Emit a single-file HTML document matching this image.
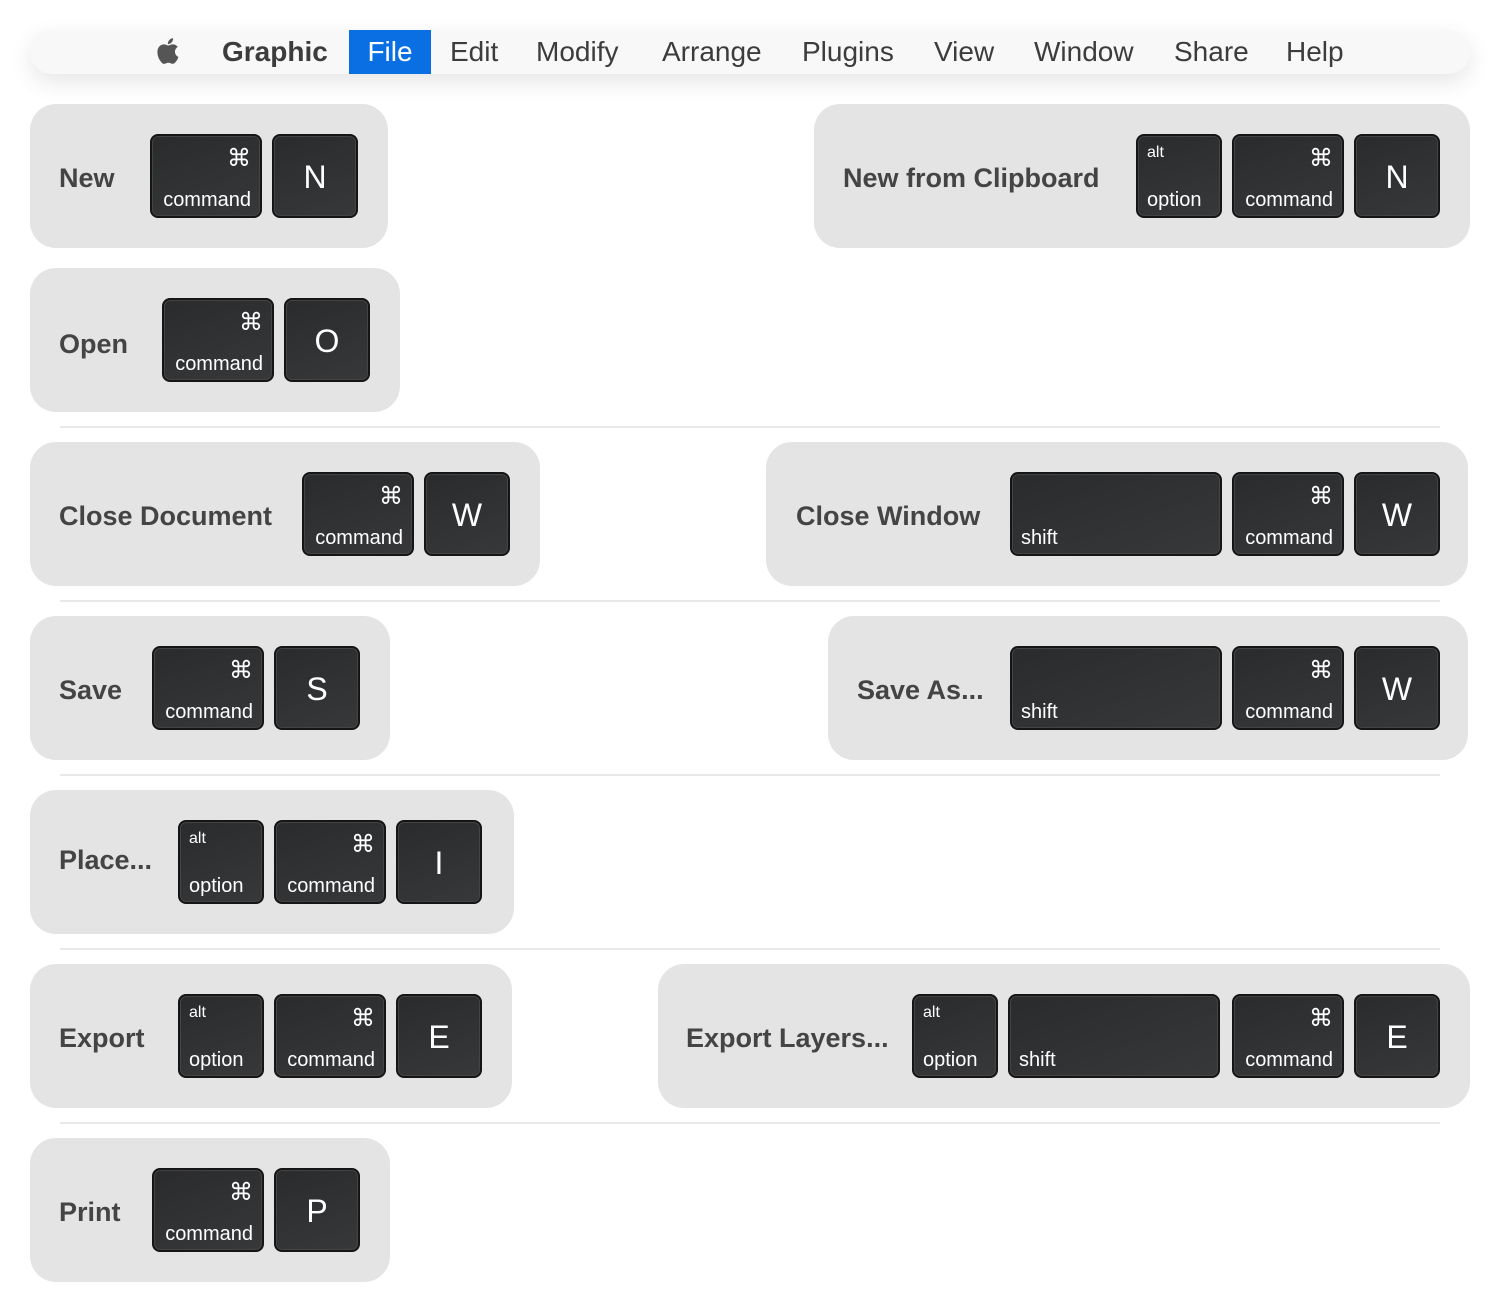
<!DOCTYPE html>
<html><head><meta charset="utf-8"><style>
*{margin:0;padding:0;box-sizing:border-box}
body{width:1500px;height:1312px;background:#fff;position:relative;overflow:hidden;font-family:"Liberation Sans",sans-serif}
.bar{position:absolute;left:30px;top:30px;width:1440px;height:44px;background:#f8f8f8;border-radius:22px;box-shadow:0 8px 24px rgba(0,0,0,0.10)}
.m{position:absolute;top:30px;height:44px;line-height:44px;font-size:28px;color:#3c3c3c}
.file{background:#0a6fe2;color:#fff;left:349px;width:82px;text-align:center}
.p{position:absolute;height:144px;background:#e4e4e4;border-radius:26px}
.sep{position:absolute;left:60px;width:1380px;height:2px;background:#e8e8e8}
.l{position:absolute;font-size:27px;font-weight:bold;color:#444;line-height:40px;margin-top:2px}
.k{position:absolute;height:84px;background:linear-gradient(160deg,#2a2b2d,#37383a);border:2px solid #151515;border-radius:8px;color:#fff;box-shadow:inset 0 0 0 1px #444}
.k .b{position:absolute;bottom:5px;font-size:20px;line-height:22px}
.k .r{right:9px}.k .lf{left:9px}
.k .c{position:absolute;right:9px;top:8px;font-size:24px;font-family:"DejaVu Sans",sans-serif}
.k .a{position:absolute;left:9px;top:8px;font-size:16px}
.k .t{position:absolute;left:0;right:0;top:0;line-height:82px;text-align:center;font-size:32px}
</style></head><body>
<div class="bar"></div>
<svg style="position:absolute;left:154px;top:35px" width="28" height="32" viewBox="0 0 24 24"><path fill="#555" d="M16.365 1.43c0 1.14-.493 2.27-1.177 3.08-.744.9-1.99 1.57-2.987 1.57-.12 0-.23-.02-.3-.03-.01-.06-.04-.22-.04-.39 0-1.15.572-2.27 1.206-2.98.804-.94 2.142-1.64 3.248-1.68.03.13.05.28.05.43zm4.565 15.71c-.03.07-.463 1.58-1.518 3.12-.945 1.34-1.94 2.71-3.43 2.71-1.517 0-1.9-.88-3.63-.88-1.698 0-2.302.91-3.67.91-1.377 0-2.332-1.26-3.428-2.8-1.287-1.820-2.323-4.63-2.323-7.28 0-4.28 2.797-6.55 5.552-6.55 1.448 0 2.675.95 3.6.95.865 0 2.222-1.010 3.902-1.010.613 0 2.886.06 4.374 2.19-.13.09-2.383 1.37-2.383 4.19 0 3.26 2.854 4.42 2.955 4.45z"/></svg>
<div class="m" style="left:222px;font-weight:bold">Graphic</div>
<div class="m file">File</div>
<div class="m" style="left:450px">Edit</div>
<div class="m" style="left:536px">Modify</div>
<div class="m" style="left:662px">Arrange</div>
<div class="m" style="left:802px">Plugins</div>
<div class="m" style="left:934px">View</div>
<div class="m" style="left:1034px">Window</div>
<div class="m" style="left:1174px">Share</div>
<div class="m" style="left:1286px">Help</div>

<div class="sep" style="top:426px"></div>
<div class="sep" style="top:600px"></div>
<div class="sep" style="top:774px"></div>
<div class="sep" style="top:948px"></div>
<div class="sep" style="top:1122px"></div>

<div class="p" style="left:30px;top:104px;width:358px"></div>
<div class="l" style="left:59px;top:156px">New</div>
<div class="k" style="left:150px;top:134px;width:112px"><span class="c">⌘</span><span class="b r">command</span></div>
<div class="k" style="left:272px;top:134px;width:86px"><span class="t">N</span></div>
<div class="p" style="left:814px;top:104px;width:656px"></div>
<div class="l" style="left:843px;top:156px">New from Clipboard</div>
<div class="k" style="left:1136px;top:134px;width:86px"><span class="a">alt</span><span class="b lf">option</span></div>
<div class="k" style="left:1232px;top:134px;width:112px"><span class="c">⌘</span><span class="b r">command</span></div>
<div class="k" style="left:1354px;top:134px;width:86px"><span class="t">N</span></div>

<div class="p" style="left:30px;top:268px;width:370px"></div>
<div class="l" style="left:59px;top:322px">Open</div>
<div class="k" style="left:162px;top:298px;width:112px"><span class="c">⌘</span><span class="b r">command</span></div>
<div class="k" style="left:284px;top:298px;width:86px"><span class="t">O</span></div>

<div class="p" style="left:30px;top:442px;width:510px"></div>
<div class="l" style="left:59px;top:494px">Close Document</div>
<div class="k" style="left:302px;top:472px;width:112px"><span class="c">⌘</span><span class="b r">command</span></div>
<div class="k" style="left:424px;top:472px;width:86px"><span class="t">W</span></div>
<div class="p" style="left:766px;top:442px;width:702px"></div>
<div class="l" style="left:796px;top:494px">Close Window</div>
<div class="k" style="left:1010px;top:472px;width:212px"><span class="b lf">shift</span></div>
<div class="k" style="left:1232px;top:472px;width:112px"><span class="c">⌘</span><span class="b r">command</span></div>
<div class="k" style="left:1354px;top:472px;width:86px"><span class="t">W</span></div>

<div class="p" style="left:30px;top:616px;width:360px"></div>
<div class="l" style="left:59px;top:668px">Save</div>
<div class="k" style="left:152px;top:646px;width:112px"><span class="c">⌘</span><span class="b r">command</span></div>
<div class="k" style="left:274px;top:646px;width:86px"><span class="t">S</span></div>
<div class="p" style="left:828px;top:616px;width:640px"></div>
<div class="l" style="left:857px;top:668px">Save As...</div>
<div class="k" style="left:1010px;top:646px;width:212px"><span class="b lf">shift</span></div>
<div class="k" style="left:1232px;top:646px;width:112px"><span class="c">⌘</span><span class="b r">command</span></div>
<div class="k" style="left:1354px;top:646px;width:86px"><span class="t">W</span></div>

<div class="p" style="left:30px;top:790px;width:484px"></div>
<div class="l" style="left:59px;top:838px">Place...</div>
<div class="k" style="left:178px;top:820px;width:86px"><span class="a">alt</span><span class="b lf">option</span></div>
<div class="k" style="left:274px;top:820px;width:112px"><span class="c">⌘</span><span class="b r">command</span></div>
<div class="k" style="left:396px;top:820px;width:86px"><span class="t">I</span></div>

<div class="p" style="left:30px;top:964px;width:482px"></div>
<div class="l" style="left:59px;top:1016px">Export</div>
<div class="k" style="left:178px;top:994px;width:86px"><span class="a">alt</span><span class="b lf">option</span></div>
<div class="k" style="left:274px;top:994px;width:112px"><span class="c">⌘</span><span class="b r">command</span></div>
<div class="k" style="left:396px;top:994px;width:86px"><span class="t">E</span></div>
<div class="p" style="left:658px;top:964px;width:812px"></div>
<div class="l" style="left:686px;top:1016px">Export Layers...</div>
<div class="k" style="left:912px;top:994px;width:86px"><span class="a">alt</span><span class="b lf">option</span></div>
<div class="k" style="left:1008px;top:994px;width:212px"><span class="b lf">shift</span></div>
<div class="k" style="left:1232px;top:994px;width:112px"><span class="c">⌘</span><span class="b r">command</span></div>
<div class="k" style="left:1354px;top:994px;width:86px"><span class="t">E</span></div>

<div class="p" style="left:30px;top:1138px;width:360px"></div>
<div class="l" style="left:59px;top:1190px">Print</div>
<div class="k" style="left:152px;top:1168px;width:112px"><span class="c">⌘</span><span class="b r">command</span></div>
<div class="k" style="left:274px;top:1168px;width:86px"><span class="t">P</span></div>
</body></html>
